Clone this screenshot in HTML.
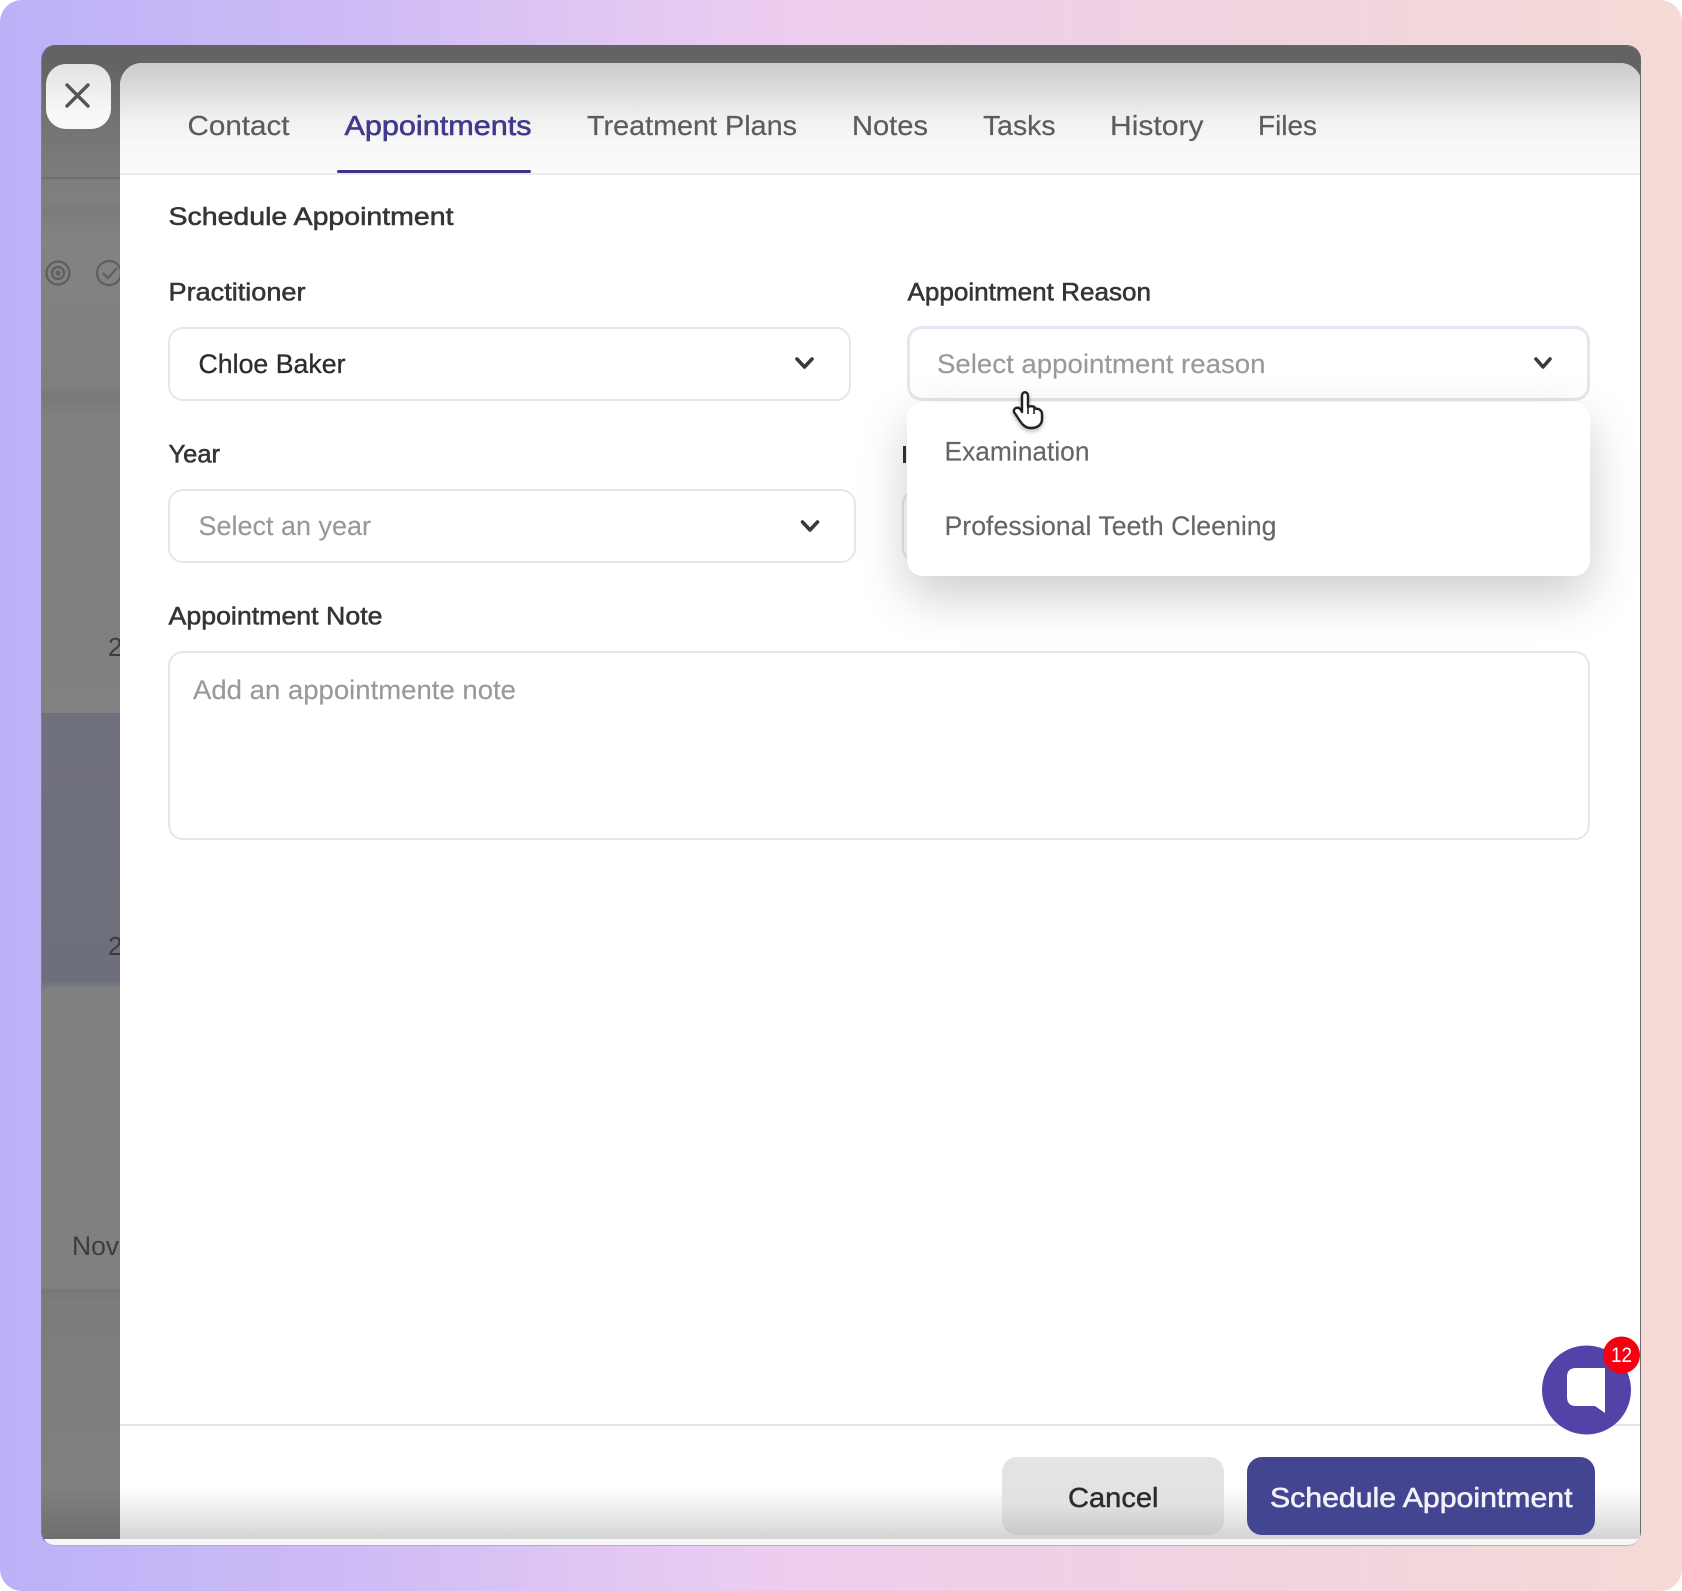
<!DOCTYPE html>
<html lang="en"><head><meta charset="utf-8"><title>Schedule Appointment</title>
<style>
html,body{margin:0;padding:0;background:#fff}
body{width:1682px;height:1591px;position:relative;overflow:hidden;font-family:"Liberation Sans",sans-serif}
div{position:absolute;box-sizing:border-box}
svg{position:absolute;left:0;top:0}
text{font-family:"Liberation Sans",sans-serif}
.box{background:#fff;border:2px solid #e6e6e6;border-radius:15px}
</style></head><body>
<div style="left:0;top:0;width:1682px;height:1591px;border-radius:22px;background:linear-gradient(90deg,#bcb1f7 0%,#cdbbf6 20%,#dfc6f3 35%,#eccdf1 45%,#efcfe9 55%,#f1d3df 75%,#f5dad6 100%)"></div>
<!-- frame -->
<div style="left:41px;top:45px;width:1600px;height:1501px;border-radius:14px;overflow:hidden;background:#fff;border-left:1px solid #7570e8;border-top:1px solid #636363;border-bottom:1px solid #b0a8ea">
  <div style="left:0;top:0;width:1600px;height:40px;background:#636363"></div>
  <div style="left:0;top:0;width:79px;height:1493px;background:linear-gradient(180deg,#636363 0,#636363 17px,#727272 70px,#7d7d7d 132px,#808080 150px,#7b7b7b 165px,#838383 190px,#7f7f7f 340px,#787878 350px,#808080 370px)"></div>
  <div style="left:0;top:131px;width:79px;height:2px;background:#6f6f6f"></div>
  <div style="left:0;top:640px;width:79px;height:28px;background:#828282"></div>
  <div style="left:0;top:667px;width:79px;height:276px;background:linear-gradient(180deg,#70717e 0,#6e6f7c 97%,#808080 100%)"></div>
  <div style="left:0;top:943px;width:79px;height:300px;background:#808080"></div>
  <div style="left:0;top:1243px;width:79px;height:250px;background:linear-gradient(180deg,#777 0,#7c7c7c 5%,#808080 80%,#6e6e6e 100%)"></div>
  <div style="left:78px;top:17px;width:1522px;height:1476px;background:#fff;border-top-left-radius:22px;border-top-right-radius:22px"></div>
  <div style="left:78px;top:17px;width:1522px;height:112px;border-top-left-radius:22px;border-top-right-radius:22px;background:linear-gradient(180deg,#cbcbcb 0,#dbdbdb 25px,#f0f0f0 55px,#f8f8f8 80px,#fafafa 112px);border-bottom:2px solid #eaeaea"></div>
  <div style="left:78px;top:1378px;width:1522px;height:2px;background:#e4e4e4"></div>
  <div style="left:78px;top:1440px;width:1522px;height:53px;background:linear-gradient(180deg,#fff 0,#eeeeee 45%,#d3d3d3 100%)"></div>
  <div style="left:0;top:1493px;width:1600px;height:8px;background:#f6f6f6"></div>
  <div style="left:1598px;top:20px;width:1px;height:1473px;background:#6b6b6b"></div>
  <div style="left:4px;top:18px;width:65px;height:65px;border-radius:20px;background:linear-gradient(180deg,#e2e2e2 0,#f6f6f6 70%,#fbfbfb 100%)"></div>
</div>

<!-- tab underline -->
<div style="left:337px;top:170px;width:194px;height:3px;background:#3b3585;border-radius:2px"></div>

<!-- form controls -->
<div class="box" style="left:168px;top:327px;width:683px;height:74px"></div>
<div class="box" style="left:168px;top:489px;width:688px;height:74px"></div>
<div class="box" style="left:902px;top:489px;width:100px;height:74px"></div>
<div class="box" style="left:907px;top:326px;width:683px;height:75px;border:3px solid #e6e6f0"></div>
<div class="box" style="left:168px;top:651px;width:1422px;height:189px"></div>
<div style="left:903px;top:446px;width:3px;height:17px;background:#333"></div>

<!-- dropdown -->
<div style="left:907px;top:402px;width:683px;height:174px;background:#fff;border-radius:16px;box-shadow:0 20px 50px rgba(0,0,0,.2)"></div>

<!-- buttons -->
<div style="left:1002px;top:1457px;width:222px;height:78px;border-radius:15px;background:linear-gradient(180deg,#e4e4e2 0,#e2e2e0 60%,#c9c9c7 100%)"></div>
<div style="left:1247px;top:1457px;width:348px;height:78px;border-radius:15px;background:#434591"></div>

<svg width="1682" height="1591" viewBox="0 0 1682 1591" style="filter:blur(.35px)">
  <defs><clipPath id="c"><rect x="42" y="45" width="78" height="1500"/></clipPath></defs>
  <!-- close -->
  <path d="M67 85 L88 106 M88 85 L67 106" stroke="#555" stroke-width="3.4" stroke-linecap="round" fill="none"/>
  <!-- background fragments -->
  <g clip-path="url(#c)">
    <g fill="none" stroke="#5e5e5e" stroke-width="2.2">
      <circle cx="58" cy="273" r="11.5"/><circle cx="58" cy="273" r="6"/><circle cx="58" cy="273" r="1.5"/>
      <circle cx="109" cy="273" r="12"/><path d="M103 273 l5 5 l9 -10"/>
    </g>
    <g fill="#3c3c3c" font-size="26">
      <text x="108" y="656">2</text>
      <text x="108" y="955" fill="#383a46">2</text>
      <text x="72" y="1255" font-size="27" textLength="47" lengthAdjust="spacingAndGlyphs">Nov</text>
    </g>
  </g>
  <!-- tabs -->
  <g font-size="28" fill="#5c5c5c" stroke="#5c5c5c" stroke-width=".2">
    <text x="187.5" y="135" textLength="102" lengthAdjust="spacingAndGlyphs">Contact</text>
    <text x="344.5" y="135" textLength="187" lengthAdjust="spacingAndGlyphs" fill="#3f3a8d" stroke="#3f3a8d" stroke-width=".6">Appointments</text>
    <text x="587" y="135" textLength="210" lengthAdjust="spacingAndGlyphs">Treatment Plans</text>
    <text x="852" y="135" textLength="76" lengthAdjust="spacingAndGlyphs">Notes</text>
    <text x="983" y="135" textLength="72.5" lengthAdjust="spacingAndGlyphs">Tasks</text>
    <text x="1110" y="135" textLength="93.5" lengthAdjust="spacingAndGlyphs">History</text>
    <text x="1258" y="135" textLength="59" lengthAdjust="spacingAndGlyphs">Files</text>
  </g>
  <!-- labels -->
  <g font-size="25" fill="#333638" stroke="#333638" stroke-width=".55">
    <text x="168.5" y="225" textLength="285" lengthAdjust="spacingAndGlyphs">Schedule Appointment</text>
    <text x="168.5" y="300.5" textLength="137" lengthAdjust="spacingAndGlyphs">Practitioner</text>
    <text x="907.5" y="300.5" textLength="243.5" lengthAdjust="spacingAndGlyphs">Appointment Reason</text>
    <text x="168.5" y="462.5" textLength="51.5" lengthAdjust="spacingAndGlyphs">Year</text>
    <text x="168.5" y="624.5" textLength="214" lengthAdjust="spacingAndGlyphs">Appointment Note</text>
  </g>
  <!-- values -->
  <g font-size="27">
    <text x="198.5" y="373" textLength="147" lengthAdjust="spacingAndGlyphs" fill="#2c2c2c" stroke="#2c2c2c" stroke-width=".3">Chloe Baker</text>
    <text x="937" y="373" textLength="328.5" lengthAdjust="spacingAndGlyphs" fill="#999" stroke="#999" stroke-width=".15">Select appointment reason</text>
    <text x="198.5" y="535" textLength="172.5" lengthAdjust="spacingAndGlyphs" fill="#999" stroke="#999" stroke-width=".15">Select an year</text>
    <text x="193" y="699" textLength="323" lengthAdjust="spacingAndGlyphs" fill="#999" stroke="#999" stroke-width=".15">Add an appointmente note</text>
    <text x="944.5" y="460.5" textLength="145" lengthAdjust="spacingAndGlyphs" fill="#666" stroke="#666" stroke-width=".15">Examination</text>
    <text x="944.5" y="535" textLength="332" lengthAdjust="spacingAndGlyphs" fill="#666" stroke="#666" stroke-width=".15">Professional Teeth Cleening</text>
  </g>
  <!-- chevrons -->
  <g fill="none" stroke="#3a3a3a" stroke-width="3.6" stroke-linecap="round" stroke-linejoin="round">
    <path d="M797 359 L804.5 367 L812 359"/>
    <path d="M802.5 522 L810 530 L817.5 522"/>
    <path d="M1536 359 L1543 367 L1550 359"/>
  </g>
  <!-- cursor -->
  <path d="M1022 396 C1022 391 1028 391 1028 396 L1028 407 C1032 405 1035 407 1036 409 C1039 408 1042 411 1042 414 L1042 419 C1042 425 1037 428 1031 428 C1025 428 1022 424 1020 421 L1014 412 C1013 408 1018 406 1021 410 L1022 412 Z" fill="#fff" stroke="#222" stroke-width="2.4" stroke-linejoin="round" style="filter:drop-shadow(0 2px 2px rgba(0,0,0,.3))"/>
  <path d="M1028 406 V414 M1034 408 V414" stroke="#222" stroke-width="1.6" fill="none"/>
  <!-- buttons text -->
  <text x="1068" y="1507" font-size="28" fill="#2c2c2c" stroke="#2c2c2c" stroke-width=".45" textLength="90.5" lengthAdjust="spacingAndGlyphs">Cancel</text>
  <text x="1270" y="1507" font-size="28" fill="#f2f2f8" stroke="#f2f2f8" stroke-width=".6" textLength="302.5" lengthAdjust="spacingAndGlyphs">Schedule Appointment</text>
  <!-- chat -->
  <circle cx="1586.5" cy="1390" r="44.5" fill="#5243a8"/>
  <path d="M1576 1368 H1605 V1413 L1595 1406 H1576 Q1567 1406 1567 1397 V1377 Q1567 1368 1576 1368 Z" fill="#fff"/>
  <circle cx="1621.5" cy="1355" r="18.5" fill="#f50010"/>
  <text x="1611" y="1362" font-size="21" fill="#fff" textLength="21" lengthAdjust="spacingAndGlyphs">12</text>
</svg>
</body></html>
